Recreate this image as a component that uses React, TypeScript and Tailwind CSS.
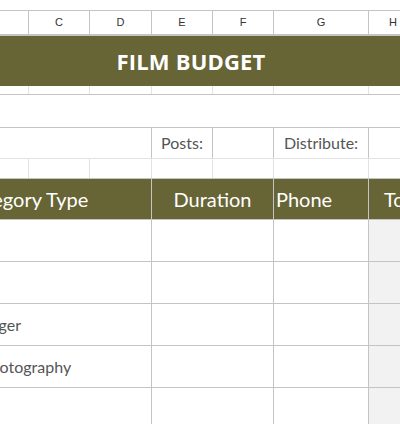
const OLIVE = "bg-[#676535]";

const COLS = ["w-[29px]", "w-[61px]", "w-[62px]", "w-[61px]", "w-[61px]", "w-[95px]", "w-[49px]"];
const LETTERS = ["B", "C", "D", "E", "F", "G", "H"];

function LightRow({ h }: { h: string }) {
  return (
    <div className={`flex ${h} shrink-0`}>
      {COLS.map((w, i) => (
        <div key={i} className={`${w} shrink-0 h-full border-r border-[#e2e2e2]`} />
      ))}
    </div>
  );
}

const ROWS = [
  { text: "", ml: "" },
  { text: "", ml: "" },
  { text: "Location Manager", ml: "-ml-[105px]" },
  { text: "Director of Photography", ml: "-ml-[99px]" },
  { text: "", ml: "" },
];

export default function App() {
  return (
    <div className="w-[400px] h-[424px] overflow-hidden bg-white font-['Lato',sans-serif] text-[#555]">
      <div className="h-[10px]" />

      {/* column letters */}
      <div className="flex h-[26px] border-t border-b-2 border-[#c4c4c4] font-['Liberation_Sans',Arial,sans-serif] text-[11px] text-[#333]">
        {COLS.map((w, i) => (
          <div
            key={i}
            className={`${w} shrink-0 h-full border-r border-[#c4c4c4] flex items-center justify-center whitespace-nowrap`}
          >
            <span className={i === 0 ? "-ml-[62px]" : ""}>{LETTERS[i]}</span>
          </div>
        ))}
      </div>

      {/* title */}
      <div className={`h-[50px] ${OLIVE} flex items-center justify-center pr-[18px]`}>
        <span className="font-['Open_Sans',sans-serif] font-bold text-[22px] text-white tracking-[0.2px]">
          FILM BUDGET
        </span>
      </div>

      <div className="border-b border-[#c4c4c4]">
        <LightRow h="h-[8px]" />
      </div>

      <div className="h-[33px] border-b border-[#c4c4c4]" />

      {/* posts / distribute */}
      <div className="flex h-[31px] border-b border-[#e2e2e2] text-[16px]">
        <div className="w-[152px] shrink-0 h-full border-r border-[#c4c4c4]" />
        <div className="w-[61px] shrink-0 h-full border-r border-[#c4c4c4] flex items-center justify-center">
          Posts:
        </div>
        <div className="w-[61px] shrink-0 h-full border-r border-[#c4c4c4]" />
        <div className="w-[95px] shrink-0 h-full border-r border-[#c4c4c4] flex items-center justify-center">
          Distribute:
        </div>
        <div className="w-[49px] shrink-0 h-full" />
      </div>

      <div className="border-b border-[#c4c4c4]">
        <LightRow h="h-[19px]" />
      </div>

      {/* table header */}
      <div className={`flex h-[41px] ${OLIVE} border-b border-[#c4c4c4] text-white text-[20px]`}>
        <div className="w-[152px] shrink-0 h-full border-r border-[#c4c4c4] flex items-center whitespace-nowrap">
          <span className="-ml-[38px]">Category Type</span>
        </div>
        <div className="w-[122px] shrink-0 h-full border-r border-[#c4c4c4] flex items-center justify-center">
          Duration
        </div>
        <div className="w-[95px] shrink-0 h-full border-r border-[#c4c4c4] flex items-center pl-[2px]">
          Phone
        </div>
        <div className="w-[49px] shrink-0 h-full flex items-center pl-[15px] whitespace-nowrap">Total</div>
      </div>

      {/* data rows */}
      {ROWS.map((r, i) => (
        <div key={i} className="flex h-[42px] border-b border-[#c4c4c4] text-[16px]">
          <div className="w-[152px] shrink-0 h-full border-r border-[#c4c4c4] flex items-center whitespace-nowrap">
            {r.text && <span className={r.ml}>{r.text}</span>}
          </div>
          <div className="w-[122px] shrink-0 h-full border-r border-[#c4c4c4]" />
          <div className="w-[95px] shrink-0 h-full border-r border-[#c4c4c4]" />
          <div className="w-[49px] shrink-0 h-full bg-[#f2f2f2]" />
        </div>
      ))}
    </div>
  );
}
